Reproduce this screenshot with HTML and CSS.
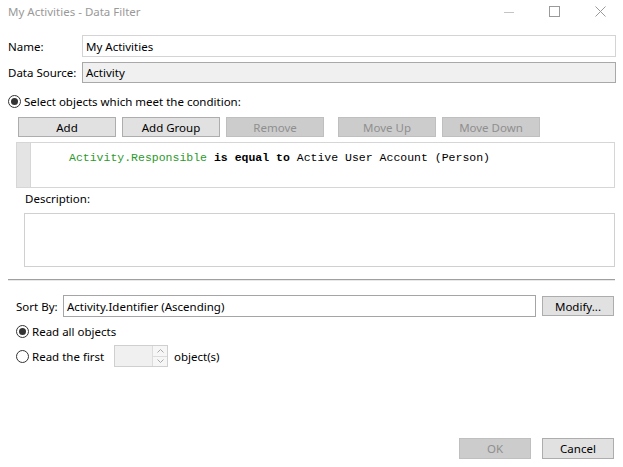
FILE: index.html
```html
<!DOCTYPE html>
<html>
<head>
<meta charset="utf-8">
<link rel="stylesheet" href="styles.css">
</head>
<body>
<div class="window">
  <div class="titlebar">
    <span class="title">My Activities - Data Filter</span>
    <div class="controls">
      <svg class="ctl" width="46" height="24" viewBox="0 0 46 24"><line x1="18" y1="12.5" x2="28" y2="12.5" stroke="#c4c4c4" stroke-width="1"/></svg>
      <svg class="ctl" width="46" height="24" viewBox="0 0 46 24"><rect x="17.5" y="6.5" width="10" height="10" fill="none" stroke="#9a9a9a" stroke-width="1"/></svg>
      <svg class="ctl" width="46" height="24" viewBox="0 0 46 24"><path d="M17.5 6.5 L27.5 16.5 M27.5 6.5 L17.5 16.5" stroke="#9a9a9a" stroke-width="1"/></svg>
    </div>
  </div>
  <div class="content">
    <div class="field-row name-row">
      <span class="label">Name:</span>
      <div class="input">My Activities</div>
    </div>
    <div class="field-row source-row">
      <span class="label">Data Source:</span>
      <div class="input readonly">Activity</div>
    </div>
    <div class="radio-row cond-radio">
      <span class="radio checked"></span>
      <span>Select objects which meet the condition:</span>
    </div>
    <div class="btn-row">
      <button class="btn">Add</button>
      <button class="btn">Add Group</button>
      <button class="btn disabled">Remove</button>
      <button class="btn disabled spaced">Move Up</button>
      <button class="btn disabled">Move Down</button>
    </div>
    <div class="condition">
      <div class="strip"></div>
      <div class="cond-text"><span class="prop">Activity.Responsible</span> <b>is equal to</b> Active User Account (Person)</div>
    </div>
    <div class="desc-label">Description:</div>
    <div class="desc-box"></div>
    <div class="separator"></div>
    <div class="sort-row">
      <span class="sort-label">Sort By:</span>
      <div class="input sort-input">Activity.Identifier (Ascending)</div>
      <button class="btn modify">Modify...</button>
    </div>
    <div class="radio-row read-all">
      <span class="radio checked"></span>
      <span>Read all objects</span>
    </div>
    <div class="radio-row read-first">
      <span class="radio"></span>
      <span class="rf-label">Read the first</span>
      <div class="spin">
        <div class="spin-field"></div>
        <div class="spin-btns">
          <div class="spin-btn"><svg width="7" height="4" viewBox="0 0 7 4"><path d="M0.5 3.5 L3.5 0.5 L6.5 3.5" fill="none" stroke="#a8a8a8"/></svg></div>
          <div class="spin-btn"><svg width="7" height="4" viewBox="0 0 7 4"><path d="M0.5 0.5 L3.5 3.5 L6.5 0.5" fill="none" stroke="#a8a8a8"/></svg></div>
        </div>
      </div>
      <span class="obj-label">object(s)</span>
    </div>
    <div class="footer">
      <button class="btn disabled">OK</button>
      <button class="btn">Cancel</button>
    </div>
  </div>
</div>
</body>
</html>
```
FILE: styles.css
```css
* { box-sizing: border-box; }
html, body { margin: 0; padding: 0; background: #fff; }
body {
  font-family: "Noto Sans", "DejaVu Sans", sans-serif;
  font-size: 11.5px;
  color: #000;
  width: 623px;
  height: 467px;
  overflow: hidden;
}
.titlebar {
  height: 24px;
  display: flex;
  align-items: center;
  padding-left: 8px;
}
.title { color: #999; flex: 1; margin-top: -1px; }
.controls { display: flex; margin-right: -1px; }
.ctl { display: block; }
.content { padding: 0 8px; }
.field-row { display: flex; align-items: center; }
.name-row { margin-top: 11px; }
.source-row { margin-top: 5px; }
.label { width: 74px; }
.input {
  flex: 1;
  height: 22px;
  border: 1px solid #d4d4d4;
  padding: 0 3px;
  display: flex;
  align-items: center;
  margin-right: -1px;
}
.input.readonly { background: #f0f0f0; border-color: #a9a9a9; height: 21px; }
.radio-row { display: flex; align-items: center; }
.cond-radio { margin-top: 11px; height: 14px; }
.radio {
  width: 13px; height: 13px;
  border: 1px solid #333;
  border-radius: 50%;
  margin-right: 3px;
  position: relative;
  flex: none;
}
.radio.checked::after {
  content: "";
  position: absolute;
  left: 2px; top: 2px;
  width: 7px; height: 7px;
  border-radius: 50%;
  background: #333;
}
.btn-row { display: flex; gap: 6px; margin-top: 9px; margin-left: 10px; }
.btn {
  font-family: inherit;
  font-size: 11.5px;
  width: 98px;
  height: 20px;
  background: #e1e1e1;
  border: 1px solid #adadad;
  color: #000;
  padding: 0;
  line-height: 17px;
}
.btn.disabled { background: #cccccc; border-color: #bfbfbf; color: #8f8f8f; }
.btn.spaced { margin-left: 8px; }
.condition {
  display: flex;
  margin-top: 5px;
  margin-left: 8px;
  height: 46px;
  border: 1px solid #d6d6d6;
}
.strip { width: 14px; background: #e4e4e4; border-right: 1px solid #d6d6d6; }
.cond-text {
  font-family: "Liberation Mono", "DejaVu Sans Mono", monospace;
  font-size: 11.5px;
  padding-left: 38px;
  padding-top: 8px;
  color: #000;
}
.prop { color: #2c9a2c; }
.cond-text b { font-weight: bold; }
.desc-label { margin-top: 2px; margin-left: 17px; height: 18px; line-height: 18px; }
.desc-box {
  margin-top: 5px;
  margin-left: 16px;
  height: 54px;
  border: 1px solid #d0d0d0;
}
.separator { margin-top: 12px; height: 1px; background: #a0a0a0; border-bottom: 1px solid #e8e8e8; box-sizing: content-box; }
.sort-row { display: flex; align-items: center; margin-top: 14px; }
.sort-label { width: 47px; margin-left: 8px; }
.sort-input { flex: none; width: 473px; height: 22px; border-color: #a5a5a5; margin-right: 0; }
.btn.modify { width: 72px; margin-left: 6px; height: 20px; }
.read-all { margin-top: 7px; margin-left: 8px; height: 14px; }
.read-first { margin-top: 7px; margin-left: 8px; height: 22px; }
.rf-label { width: 82px; }
.spin {
  display: flex;
  width: 54px;
  height: 22px;
  border: 1px solid #cfcfcf;
  background: #f0f0f0;
}
.spin-field { flex: 1; }
.spin-btns { width: 15px; display: flex; flex-direction: column; border-left: 1px solid #dcdcdc; background: #f6f6f6; }
.spin-btn { flex: 1; display: flex; align-items: center; justify-content: center; }
.spin-btn + .spin-btn { border-top: 1px solid #dcdcdc; }
.obj-label { margin-left: 6px; }
.footer { display: flex; justify-content: flex-end; gap: 11px; margin-top: 71px; margin-right: 1px; }
.footer .btn { width: 72px; height: 21px; }
```
